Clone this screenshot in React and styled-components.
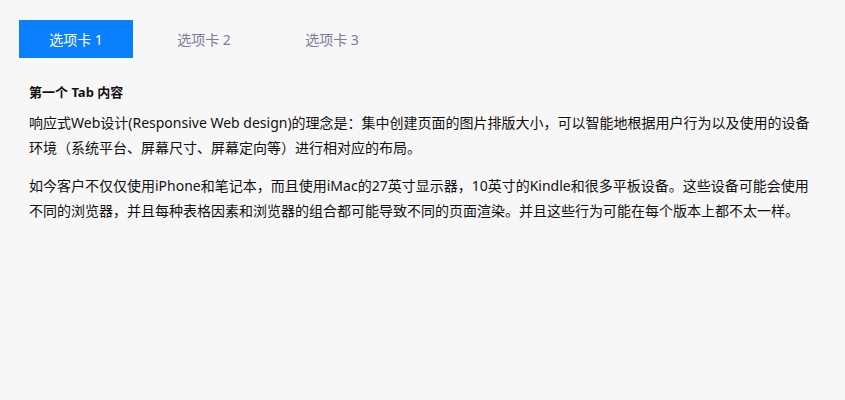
import styled, { createGlobalStyle } from "styled-components"
import { useState } from "react"

const GlobalStyle = createGlobalStyle`
  body {
    margin: 0;
    background: #f7f7f7;
    font-family: "Noto Sans", "Noto Sans CJK SC", sans-serif;
  }
`

const tabs = [
  {
    label: "选项卡 1",
    title: "第一个 Tab 内容",
    paragraphs: [
      "响应式Web设计(Responsive Web design)的理念是：集中创建页面的图片排版大小，可以智能地根据用户行为以及使用的设备环境（系统平台、屏幕尺寸、屏幕定向等）进行相对应的布局。",
      "如今客户不仅仅使用iPhone和笔记本，而且使用iMac的27英寸显示器，10英寸的Kindle和很多平板设备。这些设备可能会使用不同的浏览器，并且每种表格因素和浏览器的组合都可能导致不同的页面渲染。并且这些行为可能在每个版本上都不太一样。",
    ],
  },
  { label: "选项卡 2", title: "第二个 Tab 内容", paragraphs: [] },
  { label: "选项卡 3", title: "第三个 Tab 内容", paragraphs: [] },
]

export default function App() {
  const [active, setActive] = useState(0)
  const current = tabs[active]

  return (
    <Page>
      <GlobalStyle />
      <TabBar>
        {tabs.map((t, i) => (
          <Tab key={t.label} $active={i === active} onClick={() => setActive(i)}>
            {t.label}
          </Tab>
        ))}
      </TabBar>
      <Panel>
        <h3>{current.title}</h3>
        {current.paragraphs.map((p) => (
          <p key={p}>{p}</p>
        ))}
      </Panel>
    </Page>
  )
}

const Page = styled.div`
  height: 400px;
  padding: 20px 19px 0;
  box-sizing: border-box;
`

const TabBar = styled.div`
  display: flex;
  gap: 14px;
`

const Tab = styled.button`
  width: 114px;
  height: 38px;
  border: none;
  padding: 0;
  cursor: pointer;
  font-family: "Noto Sans", "Noto Sans CJK SC", sans-serif;
  font-size: 14px;
  background: ${(p) => (p.$active ? "#0a80fe" : "transparent")};
  color: ${(p) => (p.$active ? "#ffffff" : "#7f7a96")};
`

const Panel = styled.div`
  padding: 0 10px;
  margin-top: 22px;
  color: #111111;
  font-size: 14px;
  h3 {
    margin: 0 0 6px;
    font-size: 13px;
    font-weight: 700;
    line-height: 24px;
  }
  p {
    margin: 0 0 13px;
    line-height: 25px;
  }
`
